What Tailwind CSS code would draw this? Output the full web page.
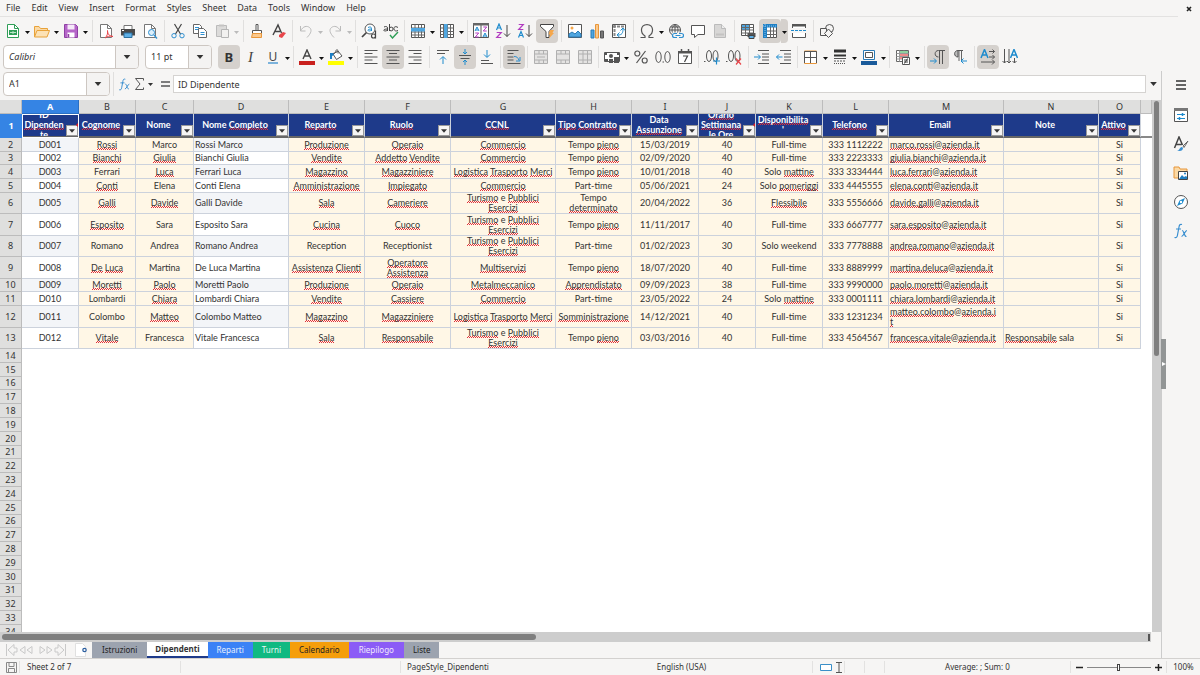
<!DOCTYPE html>
<html lang="en">

<head>
    <meta charset="UTF-8">
    <meta name="viewport" content="width=device-width, initial-scale=1.0">
    <script src="https://cdn.jsdelivr.net/npm/@tailwindcss/browser@4"></script>
    <title>Dipendenti - Calc</title>
</head>

<body class="h-screen flex flex-col overflow-hidden bg-[#f6f5f4] text-[#333] text-[9px] leading-3 font-['Noto_Sans',sans-serif]">
    <!-- Shared symbols -->
    <svg class="hidden">
        <symbol id="caret" viewBox="0 0 5 3"><path d="M0 0h5L2.500 3z" fill="currentColor" /></symbol>
        <symbol id="merge" viewBox="0 0 16 16">
            <path d="M1.500 1.500h13v13h-13z" fill="#e4e3e2" stroke="#b0b0b0" />
            <path d="M1.500 5h13M1.500 11h13M6 1.500V5M10.500 1.500V5M6 11v3.500M10.500 11v3.500" fill="none" stroke="#b0b0b0" />
        </symbol>
        <symbol id="fx" viewBox="0 0 16 16">
            <path d="M9 1.500C7 .8 6.300 2 6 4L4.500 12C4.200 14 3.500 15 1.500 14.500M3 6h5M9 7.500c2-.5 2 6.500 4.500 6M14 7.500c-2 0-3.500 6-5.500 6" fill="none" stroke="#3a8fd0" stroke-width="1.200" />
        </symbol>
    </svg>

    <!-- Menu bar -->
    <header class="flex h-[17px] shrink-0 items-center">
        <nav class="mr-4 flex h-full flex-1 items-center gap-[11px] border-b border-[#e3e2e1] pl-[6px]">
            <a href="#">File</a>
            <a href="#">Edit</a>
            <a href="#">View</a>
            <a href="#">Insert</a>
            <a href="#">Format</a>
            <a href="#">Styles</a>
            <a href="#">Sheet</a>
            <a href="#">Data</a>
            <a href="#">Tools</a>
            <a href="#">Window</a>
            <a href="#">Help</a>
        </nav>
        <button aria-label="Close document" class="-ml-2 mr-2"><svg class="size-[6px]" viewBox="0 0 6 6"><path d="M1 1l4 4M5 1L1 5" stroke="#222" stroke-width="1.600" /></svg></button>
    </header>

    <!-- Standard toolbar -->
    <div id="standard" class="mt-[2px] flex h-6 shrink-0 items-center pl-[2px]"></div>

    <!-- Formatting toolbar -->
    <div class="mt-[2px] flex h-6 shrink-0 items-center pl-[3px]">
        <div class="mr-1.5 flex h-full w-[136px] overflow-hidden rounded border border-[#cdc7c2] bg-white">
            <input aria-label="Font name" value="Calibri" class="w-0 flex-1 pl-[5px] italic outline-none">
            <button aria-label="Font list" class="flex w-[23px] items-center justify-center border-l border-[#cdc7c2] bg-[#f4f3f2]"><svg class="h-1 w-2"><use href="#caret" /></svg></button>
        </div>
        <div class="mr-1.5 flex h-full w-[67px] overflow-hidden rounded border border-[#cdc7c2] bg-white">
            <input aria-label="Font size" value="11 pt" class="w-0 flex-1 pl-[5px] outline-none">
            <button aria-label="Size list" class="flex w-[23px] items-center justify-center border-l border-[#cdc7c2] bg-[#f4f3f2]"><svg class="h-1 w-2"><use href="#caret" /></svg></button>
        </div>
        <div id="formatting" class="flex h-full items-center"></div>
    </div>

    <main class="mt-[2px] flex min-h-0 flex-1">
        <section class="flex min-w-0 flex-1 flex-col">
            <!-- Formula bar -->
            <div class="flex h-[29px] shrink-0 items-start pl-[3px] pt-px">
                <div class="flex h-6 w-[107px] overflow-hidden rounded border border-[#cdc7c2] bg-white">
                    <input aria-label="Name box" value="A1" class="w-0 flex-1 pl-[5px] outline-none">
                    <button aria-label="Cell ranges" class="flex w-[23px] items-center justify-center border-l border-[#cdc7c2] bg-[#f4f3f2]"><svg class="h-1 w-2"><use href="#caret" /></svg></button>
                </div>
                <div class="ml-[3px] flex h-6 items-center border-l border-[#e0dfde] pl-[4px]">
                    <button aria-label="Function wizard"><svg class="size-[13px]"><use href="#fx" /></svg></button>
                    <button aria-label="Select function" class="ml-1 flex items-center gap-1">
                        <svg class="h-3 w-[9px]" viewBox="0 0 9 12"><path d="M8.500 2.500v-2h-8L5 6 .5 11.500h8v-2" fill="none" stroke="#555" /></svg>
                        <svg class="h-[3px] w-[5px]"><use href="#caret" /></svg>
                    </button>
                    <button aria-label="Formula" class="ml-2 mr-[3px]"><svg class="h-[6px] w-[9px]" viewBox="0 0 9 6"><path d="M0 1h9M0 5h9" stroke="#555" stroke-width="1.500" /></svg></button>
                </div>
                <input aria-label="Input line" value="ID Dipendente" class="mt-[3px] h-[18px] flex-1 border border-[#d5d3d1] bg-white pl-[4px] outline-none">
                <button aria-label="Expand formula bar" class="flex h-6 w-[15px] items-center justify-center"><svg class="h-1 w-[7px]"><use href="#caret" /></svg></button>
            </div>

            <!-- Cells -->
            <div class="flex min-h-0 flex-1">
                <div class="min-w-0 flex-1 overflow-hidden bg-white">
                    <table class="w-full table-fixed border-collapse">
                        <colgroup id="cols"></colgroup>
                        <thead id="letters"></thead>
                        <tbody id="cells"></tbody>
                    </table>
                </div>
                <div class="w-[9px] shrink-0 bg-[#cdcdcd] pt-px">
                    <div class="ml-[2px] h-[255px] w-[5px] rounded-full bg-[#7f7f7f]"></div>
                </div>
            </div>
            <div class="mr-[10px] flex h-[10px] shrink-0 items-center bg-[#cdcdcd] pl-[2px]">
                <div class="h-[6px] w-[534px] rounded-full bg-[#7f7f7f]"></div>
                <div class="ml-auto mr-px h-[7px] w-[2px] bg-[#555]"></div>
            </div>

            <!-- Sheet tabs -->
            <div class="flex h-4 shrink-0 items-center text-[8px]">
                <button aria-label="Scroll sheets" class="ml-[5px] mr-[7px]">
                    <svg class="h-[14px] w-[62px]" viewBox="0 0 62 14" fill="none" stroke="#c9c9c9">
                        <path d="M1.500 1v12M3 7l6-5.500v3.500h3v4H9v3.500zM20 3.500L15 7l5 3.500zM27 3.500L22 7l5 3.500zM35 3.500L40 7l-5 3.500zM42 3.500L47 7l-5 3.500zM59 7l-6-5.500v3.500h-3v4h3v3.500zM60.500 1v12" />
                    </svg>
                </button>
                <button aria-label="Add sheet" class="mr-[4px]">
                    <svg class="h-4 w-[14px]" viewBox="0 0 14 16"><path d="M1.500 1.500h7l3 3v10h-10z" fill="#fff" stroke="#e0e0e0" /><circle cx="10.500" cy="8" r="1.700" fill="#fff" stroke="#2a5d9e" stroke-width="1.200" /></svg>
                </button>
                <button class="h-full bg-[#9ca3af] px-[10px] text-[#222]">Istruzioni</button>
                <button class="h-full border-b-2 border-[#1e3a8a] bg-white px-2 font-bold">Dipendenti</button>
                <button class="h-full bg-[#3b82f6] px-[9px] text-[#e8f0fe]">Reparti</button>
                <button class="h-full bg-[#10b981] px-[9px] text-[#e8f8f2]">Turni</button>
                <button class="h-full bg-[#f59e0b] px-[9px] text-[#222]">Calendario</button>
                <button class="h-full bg-[#8b5cf6] px-[10px] text-[#f0eafe]">Riepilogo</button>
                <button class="h-full bg-[#9ca3af] px-[9px] text-[#222]">Liste</button>
            </div>
        </section>

        <!-- Sidebar -->
        <aside class="relative flex w-[39px] shrink-0 flex-col items-center gap-[13px] border-l border-[#ccc] pt-[7px]">
            <button class="absolute -left-px top-[268px] flex h-[50px] w-[5px] items-center justify-center bg-[#929595]" aria-label="Hide sidebar"><svg class="size-1" viewBox="0 0 4 4"><path d="M0 0l4 2-4 2z" fill="#fff" /></svg></button>
            <button aria-label="Sidebar settings"><svg class="size-4" viewBox="0 0 16 16"><path d="M3 3h10M3 7h10M3 11h10" stroke="#333" stroke-width="1.500" /></svg></button>
            <button aria-label="Properties"><svg class="size-4" viewBox="0 0 16 16" fill="none"><path d="M1.500 1.500h13v13h-13z" fill="#fff" stroke="#555" /><path d="M1 1h14v3H1z" fill="#777" /><path d="M4 7.500h8M4 11.500h8" stroke="#1e8bcd" /><path d="M9.500 6v3M6.500 10v3" stroke="#1e8bcd" stroke-width="1.500" /></svg></button>
            <button aria-label="Styles"><svg class="size-4" viewBox="0 0 16 16" fill="none"><path d="M1.500 12L6 1l3.500 8M3 8.500h5.500" stroke="#444" stroke-width="1.500" /><path d="M15 5l-5 5 1 1.500z" fill="#fff" stroke="#666" /><path d="M4 14.500c3 0 2-3 5-3.500l1 1c0 3-3 3.500-6 2.500z" fill="#3a8fd0" /></svg></button>
            <button aria-label="Gallery"><svg class="size-4" viewBox="0 0 16 16"><path d="M1 2h5l1 2h7v9H1z" fill="#fbd9a5" stroke="#e8963a" /><path d="M5.500 6.500h9v8h-9z" fill="#fff" stroke="#444" /><path d="M6 14l3-4 2 2 2-1 1 1v2z" fill="#1e7fc4" /><circle cx="12" cy="8.500" r="1" fill="#1e7fc4" /></svg></button>
            <button aria-label="Navigator"><svg class="size-4" viewBox="0 0 16 16"><circle cx="8" cy="8" r="6.500" fill="#fff" stroke="#555" /><path d="M12 4l-2.500 5.500L4 12l2.500-5.500z" fill="#1e8bcd" /><circle cx="8" cy="8" r="1.200" fill="#fff" /></svg></button>
            <button aria-label="Functions"><svg class="size-4"><use href="#fx" /></svg></button>
        </aside>
    </main>

    <!-- Status bar -->
    <footer class="flex h-[17px] shrink-0 items-center border-t border-[#d3d1cf] text-[8px] *:flex *:h-3 *:items-center">
        <div class="w-5 justify-center border-r border-[#e3e2e1] pl-1"><svg class="size-[11px]" viewBox="0 0 11 11" fill="none" stroke="#888"><path d="M.5.5h10v10H.500zM3 .5v4h5v-4M2.500 10.500v-4h6v4" /></svg></div>
        <div class="w-[161px] border-r border-[#e3e2e1] pl-[7px]">Sheet 2 of 7</div>
        <div class="w-[220px] border-r border-[#e3e2e1]"></div>
        <div class="flex-1 pl-1.5">PageStyle_Dipendenti</div>
        <div class="w-[262px] justify-center border-r border-[#e3e2e1]">English (USA)</div>
        <div class="w-8 justify-center gap-1 border-r border-[#e3e2e1] pl-1">
            <svg class="h-[7px] w-3" viewBox="0 0 12 7"><path d="M.5.5h11v6H.500z" fill="#fff" stroke="#3a8fc8" /></svg>
            <svg class="h-[11px] w-[6px]" viewBox="0 0 6 11"><path d="M0 .5h6M0 10.500h6M3 0v11" stroke="#555" /></svg>
        </div>
        <div class="w-5 border-r border-[#e3e2e1]"></div>
        <div class="w-5 border-r border-[#e3e2e1]"></div>
        <div class="w-[186px] justify-center border-r border-[#e3e2e1]">Average: ; Sum: 0</div>
        <div class="w-24 justify-center gap-1 border-r border-[#e3e2e1]">
            <button aria-label="Zoom out"><svg class="size-[7px]" viewBox="0 0 7 7"><path d="M0 3.500h7" stroke="#222" stroke-width="1.500" /></svg></button>
            <input type="range" aria-label="Zoom" min="0" max="100" value="50" class="h-2 w-16 appearance-none bg-transparent [&::-webkit-slider-runnable-track]:h-px [&::-webkit-slider-runnable-track]:bg-[#888] [&::-webkit-slider-thumb]:-mt-[3px] [&::-webkit-slider-thumb]:h-[7px] [&::-webkit-slider-thumb]:w-[3px] [&::-webkit-slider-thumb]:appearance-none [&::-webkit-slider-thumb]:border [&::-webkit-slider-thumb]:border-[#444] [&::-webkit-slider-thumb]:bg-white">
            <button aria-label="Zoom in"><svg class="size-[7px]" viewBox="0 0 7 7"><path d="M0 3.500h7M3.500 0v7" stroke="#222" stroke-width="1.500" /></svg></button>
        </div>
        <div class="w-[33px] justify-center">100%</div>
    </footer>

    <script>
        // Toolbar icons, drawn on a 16x16 grid
        const icons = {
            New: '<path d="M2.500 1.500h7l4 4v9h-11z" fill="#fff" stroke="#2f9e57"/><path d="M9.500 1.500v4h4" stroke="#2f9e57"/><path d="M4 7h8v5H4z" fill="#2f9e57"/><path d="M5 9.500h6M8 8v3" stroke="#b9e3c6"/>',
            Open: '<path d="M.5 14V3.500H5l1.500 2h7V8" fill="#fbd9a5" stroke="#e8a33a"/><path d="M.5 14L3 7.500h12.500L13 14z" fill="#fce2b6" stroke="#e8a33a"/>',
            Save: '<path d="M1.500 1.500h11l2 2v11h-13z" fill="#b565c8" stroke="#8e3fa3"/><path d="M4.500 1.500h7v5h-7z" fill="#f5e9f8"/><path d="M4.500 9.500h7v5h-7z" fill="#fff"/><path d="M5.500 11v3.500" stroke="#8e3fa3" stroke-width="1.500"/>',
            'Export as PDF': '<path d="M2.500 1.500h7l4 4v9h-11z" fill="#fff" stroke="#777"/><path d="M9.500 1.500v4h4" stroke="#777"/><path d="M7 15c2-2 3-4 2.500-7.500 0 4 2 5.500 5.500 6-3-1-6 0-8 1.500z" stroke="#e8464b"/>',
            Print: '<path d="M4 2.500h8v4H4z" fill="#fff" stroke="#777"/><path d="M1 6h14v6.500H1z" fill="#4a4a4a"/><path d="M2 7.500h2" stroke="#fff"/><path d="M4 10h8v4.500H4z" fill="#5fb0e6" stroke="#2c6f9e"/>',
            'Print Preview': '<path d="M2.500 14.500v-13h7l4 4v9z" fill="#fff" stroke="#777"/><path d="M9.500 1.500v4h4" stroke="#777"/><circle cx="9.500" cy="9.500" r="3" fill="#dceffb" stroke="#2e8fd0"/><path d="M12 12l3 3.500" stroke="#2e8fd0" stroke-width="1.300"/>',
            Cut: '<path d="M4.500 1l6 10M11.500 1l-6 10" stroke="#444" stroke-width="1.200"/><circle cx="4" cy="12.700" r="2.200" stroke="#2e8fd0"/><circle cx="12" cy="12.700" r="2.200" stroke="#2e8fd0"/>',
            Copy: '<path d="M1.500 1.500h6l2 2v7h-8z" fill="#fff" stroke="#666"/><path d="M3 4.500h4M3 6.500h4" stroke="#2e8fd0"/><path d="M6.500 5.500h5l3 3v6h-8z" fill="#fff" stroke="#666"/><path d="M8.500 9.500h4M8.500 11.500h4" stroke="#2e8fd0"/>',
            Paste: '<path d="M2.500 2.500h10v11h-10z" fill="#dcdbda" stroke="#bbb"/><path d="M5 1.500h5v2H5z" fill="#c4c3c2"/><path d="M7.500 6.500h7v8h-7z" fill="#f2f1f0" stroke="#b5b5b5"/>',
            'Clone Formatting': '<path d="M7 1.500h2v6H7z" fill="#fff" stroke="#555"/><path d="M3.500 7.500h9v3h-9z" fill="#fff" stroke="#555"/><path d="M3.500 10.500h9v4h-10z" fill="#fbc98d" stroke="#e8963a"/>',
            'Clear Formatting': '<path d="M2 12L7 2l3.500 8M4 8.500h5" stroke="#444" stroke-width="1.400"/><path d="M8 12l4-3 3 1-4 5-3-1z" fill="#e8464b"/>',
            Undo: '<path d="M2.500 3v5h5M2.500 8C5 3 9 2.500 11.500 4.500s2 5.500-2.500 10" stroke="#bbb"/>',
            Redo: '<path d="M13.500 3v5h-5M13.500 8C11 3 7 2.500 4.500 4.500s-2 5.500 2.500 10" stroke="#bbb"/>',
            'Find and Replace': '<circle cx="9" cy="6" r="5" fill="#fff" stroke="#555"/><path d="M5.500 9.500L1 14" stroke="#444" stroke-width="1.700"/><path d="M7 4.500c2-1 3.500-.5 3.500 1V8M10.500 6C8 6 7 6.500 7 7.300S9 8.500 10.500 7" stroke="#1e8bcd"/><path d="M14.500 7.500v8" stroke="#444" stroke-width="1.200"/><circle cx="12.500" cy="13" r="2" fill="#fff" stroke="#444" stroke-width="1.200"/>',
            Spelling: '<path d="M1 4c2-1 3.500-.5 3.500 1v3M4.500 6C2 6 .8 6.500.8 7.300S3 8.500 4.500 7M6.500 1v7M15 4.500c-3-2-4.500 0-4 1.700s2 2.300 4 1.300" stroke="#444"/><circle cx="8.200" cy="6" r="1.900" stroke="#444"/><path d="M7 12l2.500 3L15 9" stroke="#2f9e57" stroke-width="1.400"/>',
            Row: '<path d="M1.500 1.500h13v13h-13z" fill="#fff" stroke="#555"/><path d="M1.500 5h13M1.500 9h13M1.500 12h13M5 1.500v13M8.500 1.500v13M11.500 1.500v13" stroke="#666"/><path d="M1 5h14v3.500H1z" fill="#4fa6e0"/>',
            Column: '<path d="M1.500 1.500h13v13h-13z" fill="#fff" stroke="#555"/><path d="M1.500 5h13M1.500 8.500h13M1.500 11.500h13M4.500 1.500v13M8.500 1.500v13M11.500 1.500v13" stroke="#666"/><path d="M5 1h3.500v14H5z" fill="#4fa6e0"/>',
            Sort: '<path d="M.5.5h15v14H.500zM8 1v14" fill="#fff" stroke="#555"/><path d="M0 0h16v2.500H0z" fill="#666"/><path d="M2 8l2-4 2 4M2.700 7h2.600M10 14l2-4 2 4M10.700 13h2.600" stroke="#1e8bcd"/><path d="M2.300 10h3.400l-3.400 4h3.400M10.300 4h3.400l-3.400 4h3.400" stroke="#b23cc0"/>',
            'Sort Ascending': '<path d="M1.500 7l2.500-6 2.500 6M2.500 5h3" stroke="#1e8bcd" stroke-width="1.200"/><path d="M1.700 9.500h4.600L1.700 14.500h4.600" stroke="#b23cc0" stroke-width="1.200"/><path d="M12 2v11.500M9 10.500l3 3 3-3" stroke="#444"/>',
            'Sort Descending': '<path d="M1.500 14.500L4 8.500l2.500 6M2.500 12.500h3" stroke="#1e8bcd" stroke-width="1.200"/><path d="M1.700 1.500h4.600L1.700 6.500h4.600" stroke="#b23cc0" stroke-width="1.200"/><path d="M12 2v11.500M9 10.500l3 3 3-3" stroke="#444"/>',
            AutoFilter: '<path d="M1.500 1.500h13v2L10 8.500v6H7v-6L1.500 3.500z" fill="#fff" stroke="#444"/><path d="M11 7h4l-1.500 3H15l-5 5.500 1.200-4H9.500z" fill="#f5a64a"/>',
            'Insert Image': '<path d="M1.500 1.500h13v13h-13z" fill="#fff" stroke="#555"/><path d="M2 14V11l3-2 3 2 3-3 3 3v3z" fill="#4fa6e0" stroke="#2a7ab5"/><circle cx="5" cy="5" r="1.500" fill="#f5a64a"/>',
            'Insert Chart': '<path d="M2 7h3v8H2z" fill="#4fa6e0" stroke="#2a7ab5"/><path d="M6.500 1.500h3v13.500h-3z" fill="#fbc98d" stroke="#e8963a"/><path d="M11.500 8h3v7h-3z" fill="#777" stroke="#555"/>',
            'Pivot Table': '<path d="M1.500 1.500h13v13h-13z" fill="#fff" stroke="#555"/><path d="M2 3.500h12M3.500 2v12" stroke="#888" stroke-width="2" stroke-dasharray="3 1"/><path d="M7 12c4 0 5-2 5-6M9.500 7.500L12 5l2 2.500M8.500 9.500L6 12l2.500 2" stroke="#1e8bcd"/>',
            'Special Character': '<path d="M1.500 14.500H6v-1.500C1 10 1 2 8 1.500c7 .5 7 8.500 2 11.500v1.500h4.500" stroke="#555" stroke-width="1.200"/>',
            Hyperlink: '<circle cx="7" cy="7" r="5.500" stroke="#555"/><path d="M1.500 7h11M2.500 4h9M7 1.500v11M7 1.500c-4 3-4 8 0 11M7 1.500c4 3 4 8 0 11" stroke="#555"/><path d="M4 9.500h12v6H4z" fill="#f6f5f4"/><path d="M9 10.500H6.500a2 2 0 000 4H9M11 10.500h2.500a2 2 0 010 4H11M7.500 12.500h5" stroke="#2e8fd0" stroke-width="1.200"/>',
            Comment: '<path d="M1.500 2.500h13v9H8l-3.500 3v-3h-3z" fill="#fff" stroke="#555"/>',
            'Headers and Footers': '<path d="M2.500 1.500h7l4 4v9h-11z" fill="#d8d7d6" stroke="#bbb"/><path d="M9.500 1.500v4h4" fill="#eee" stroke="#bbb"/><path d="M4 11.500h8" stroke="#c4c3c2" stroke-width="2"/>',
            'Print Area': '<path d="M1.500 1.500h12v11h-12z" fill="#fff" stroke="#555"/><path d="M2 2h8v5H2z" fill="#4fa6e0"/><path d="M1.500 4.500h12M1.500 7h12M1.500 10h12M5.500 1.500v11M9.500 1.500v11" stroke="#666"/><path d="M7.500 10h8v4h-8z" fill="#555"/><path d="M9 12.500h5v3H9z" fill="#5fb0e6" stroke="#444"/>',
            'Freeze Rows and Columns': '<path d="M1.500 1.500h13v13h-13z" fill="#fff" stroke="#555"/><path d="M1 1h14v3.500H5V15H1z" fill="#1e7fc4"/><path d="M5 8h10M5 11.500h10M8.500 4v11M11.500 4v11" stroke="#666"/><path d="M3 1v14M1 3h14" stroke="#8cc6ee" stroke-dasharray="1 1"/>',
            'Split Window': '<path d="M1.500 5V1.500h13V5M1.500 10v4.500h13V10" fill="#fff" stroke="#555"/><path d="M1 1h14v2.500H1z" fill="#555"/><path d="M0 7.500h16" stroke="#1e8bcd" stroke-dasharray="3 1"/>',
            'Draw Functions': '<circle cx="10.500" cy="5.500" r="4" stroke="#555"/><path d="M1.500 5.500h6v7h-6z" fill="#f6f5f4" stroke="#555"/><path d="M9.500 6l4 4.500-4 4-4-4z" fill="#f6f5f4" stroke="#555"/>',
            Bold: '<text x="3.500" y="13" font-size="13" font-weight="bold" fill="#333">B</text>',
            Italic: '<text x="5" y="13" font-size="15" font-style="italic" font-family="Liberation Serif" fill="#444">I</text>',
            Underline: '<text x="3.500" y="11.500" font-size="12" fill="#444">U</text><path d="M3 14h10" stroke="#3a8fd0" stroke-width="1.300"/>',
            'Font Color': '<path d="M4 10L8 1l4 9M5.500 7h5" stroke="#444" stroke-width="1.400"/><path d="M0 12h16v4H0z" fill="#c9211e"/>',
            Highlighting: '<path d="M5 5l5-3 4 5-5.500 3.500z" fill="#fff" stroke="#555"/><path d="M8 4C7 1 9 0 10 1.500v3M3 10V5l4-1" stroke="#555"/><path d="M2 10V4h3l1 2-2 1v3z" fill="#1e7fc4"/><path d="M0 12h16v4H0z" fill="#ff0"/>',
            'Align Left': '<path d="M1.500 1.500h13M1.500 4.500h8M1.500 8h13M1.500 11h8M1.500 14.500h13" stroke="#555"/>',
            'Align Center': '<path d="M1.500 1.500h13M4 4.500h8M1.500 8h13M4 11h8M1.500 14.500h13" stroke="#555"/>',
            'Align Right': '<path d="M1.500 1.500h13M6.500 4.500h8M1.500 8h13M6.500 11h8M1.500 14.500h13" stroke="#555"/>',
            'Align Top': '<path d="M2 1.500h12M2 4.500h8" stroke="#555"/><path d="M8 15V8M5 10.500L8 7.500l3 3" stroke="#1e8bcd"/>',
            'Center Vertically': '<path d="M2 6.500h12M3.500 9.500h9" stroke="#555"/><path d="M8 0v5M6 3l2 2 2-2M8 16v-5M6 13l2-2 2 2" stroke="#1e8bcd"/>',
            'Align Bottom': '<path d="M2 11.500h8M2 14.500h12" stroke="#555"/><path d="M8 1v7M5 5.500l3 3 3-3" stroke="#1e8bcd"/>',
            'Wrap Text': '<path d="M1.500 1.500h11M1.500 4.500h6M1.500 8h6M1.500 11h6M1.500 14.500h13" stroke="#555"/><path d="M8 7.500c3 0 4 1 5 4M14 8v4h-4" stroke="#2e8fd0"/>',
            'Merge and Center': '<use href="#merge"/><path d="M4 8h8" stroke="#b0b0b0"/>',
            'Merge Cells': '<use href="#merge"/>',
            'Unmerge Cells': '<use href="#merge"/><path d="M6 5v6M10.500 5v6" stroke="#b0b0b0"/>',
            Currency: '<path d="M.5 3.500h15v9H.500z" fill="#fff" stroke="#555"/><circle cx="7" cy="7" r="2" fill="#555"/><path d="M1 4h2v2H1zM13 4h2v2h-2zM1 10h3v2H1z" fill="#555"/><path d="M5 10h4v4H5zM10 8h5v6h-5z" fill="#555"/>',
            Percent: '<circle cx="4.300" cy="4.500" r="2.500" stroke="#555" stroke-width="1.200"/><circle cx="11.700" cy="11.500" r="2.500" stroke="#555" stroke-width="1.200"/><path d="M12.500 2l-9 12" stroke="#555" stroke-width="1.200"/>',
            Number: '<ellipse cx="3.500" cy="8" rx="2.700" ry="5.500" stroke="#555"/><path d="M7.500 13h1.500" stroke="#555"/><ellipse cx="12.500" cy="8" rx="2.700" ry="5.500" stroke="#555"/>',
            Date: '<path d="M1.500 2.500h13v12h-13z" fill="#fff" stroke="#555"/><path d="M1 2h14v2.500H1z" fill="#555"/><path d="M4.500 0v3M11.500 0v3" stroke="#555" stroke-width="1.500"/><path d="M6 7h4.500L7.500 13" stroke="#444" stroke-width="1.200"/>',
            'Add Decimal Place': '<path d="M0 12.500h1.500" stroke="#555"/><ellipse cx="5" cy="7" rx="2.500" ry="5.500" stroke="#555"/><ellipse cx="11.500" cy="7" rx="2.500" ry="5.500" stroke="#555"/><path d="M9 12h7M12.500 8.500v7" stroke="#1e8bcd" stroke-width="1.200"/>',
            'Delete Decimal Place': '<path d="M0 12.500h1.500" stroke="#555"/><ellipse cx="5" cy="7" rx="2.500" ry="5.500" stroke="#555"/><ellipse cx="11.500" cy="7" rx="2.500" ry="5.500" stroke="#555"/><path d="M10 9.500l5 6M15 9.500l-5 6" stroke="#e8464b" stroke-width="1.200"/>',
            'Increase Indent': '<path d="M4 1.500h11M8 5h7M8 8h7M8 11h7M4 14.500h11" stroke="#555"/><path d="M0 8h6M4 5.500L6.500 8 4 10.500" stroke="#1e8bcd"/>',
            'Decrease Indent': '<path d="M4 1.500h11M8 5h7M8 8h7M8 11h7M4 14.500h11" stroke="#555"/><path d="M.5 8h6M3 5.500L.5 8 3 10.500" stroke="#1e8bcd"/>',
            Borders: '<path d="M1.500 2v12.500h12V2z" fill="#fff" stroke="#e8963a"/><path d="M1.500 14V2.500h12V14M7.500 2v12M1.500 8.500h12" stroke="#555"/>',
            'Border Style': '<path d="M2 2h12" stroke="#333" stroke-width="3"/><path d="M2 6.500h12" stroke="#333" stroke-width="2"/><path d="M2 9.500h12" stroke="#555"/><path d="M2 12h12" stroke="#555" stroke-dasharray="2 1"/><path d="M2 14.500h12" stroke="#555" stroke-dasharray="1 1"/>',
            'Border Color': '<path d="M2.500 1.500h11v9h-11z" fill="#fff" stroke="#2a7ab5"/><path d="M4.500 3.500h7v5h-7z" stroke="#555"/><path d="M0 12h16v4H0z" fill="#1a5a9a"/>',
            'Conditional Formatting': '<path d="M1.500 1.500h12v11h-12z" fill="#fff" stroke="#666"/><path d="M1.500 4.500h12M1.500 7.500h12M1.500 10h12M4.500 1.500v11M9 1.500v11" stroke="#999"/><path d="M5 2h8v2H5z" fill="#8fd19e"/><path d="M5 5h8v2H5zM5 8h5v2H5z" fill="#f08a8a"/><path d="M7.500 8.500h7v7h-7z" fill="#fff" stroke="#555"/><path d="M9 11h4M9 13h4M12.500 9.500l-3 5" stroke="#444"/>',
            'Left-To-Right': '<path d="M15 1.500H8.500C4 1.500 4 8 8.500 8M9.500 1.500V15M12.500 1.500V15" stroke="#555"/><path d="M0 12h6M4 9.500L6.500 12 4 14.500" stroke="#1e8bcd"/>',
            'Right-To-Left': '<path d="M11 1.500H6C1.500 1.500 1.500 8 6 8V2" fill="#bbb" stroke="#555"/><path d="M7 1.500V12M9.500 1.500V12" stroke="#666"/><path d="M9 12h6M11.500 9.500L9 12l2.500 2.500" stroke="#1e8bcd"/>',
            'Text Left to Right': '<path d="M1 9L4.500.5 8 9M2.500 6h4" stroke="#1e8bcd" stroke-width="1.500"/><path d="M9 2.500h5.500M12.500.500l2 2-2 2M9 8h5.500M12.500 6l2 2-2 2M1 13h13.500M12 10.500l2.500 2.500L12 15.500" stroke="#555"/>',
            'Text Top to Bottom': '<path d="M8.500 9L12 .5 15.500 9M10 6h4" stroke="#1e8bcd" stroke-width="1.500"/><path d="M2.500 0v14M.5 12l2 2 2-2M7 0v14M5 12l2 2 2-2M12.500 9v5M10.500 12l2 2 2-2" stroke="#555"/>'
        };

        // "|" and "¦" are separators, "v" a drop-down arrow, "+" a pressed button, "-" a disabled arrow
        const standard = ['New', 'v', 'Open', 'v', 'Save', 'v', '|', 'Export as PDF', 'Print', 'Print Preview', '|', 'Cut', 'Copy', 'Paste', '-', '|',
            'Clone Formatting', 'Clear Formatting', '¦', 'Undo', '-', 'Redo', '-', '¦', 'Find and Replace', 'Spelling', '¦', 'Row', 'v', 'Column', 'v', '¦',
            'Sort', 'Sort Ascending', 'Sort Descending', '+AutoFilter', '|', 'Insert Image', 'Insert Chart', 'Pivot Table', '|',
            'Special Character', 'v', 'Hyperlink', 'Comment', 'Headers and Footers', '|', 'Print Area', '+Freeze Rows and Columns', '+v', 'Split Window', '|', 'Draw Functions'];
        const formatting = ['+Bold', 'Italic', 'Underline', 'v', '¦', 'Font Color', 'v', 'Highlighting', 'v', '|', 'Align Left', '+Align Center', 'Align Right', '|',
            'Align Top', '+Center Vertically', 'Align Bottom', '¦', '+Wrap Text', '¦', 'Merge and Center', 'Merge Cells', 'Unmerge Cells', '¦',
            'Currency', 'v', 'Percent', 'Number', 'Date', '¦', 'Add Decimal Place', 'Delete Decimal Place', '|', 'Increase Indent', 'Decrease Indent', '¦',
            'Borders', 'v', 'Border Style', 'v', 'Border Color', 'v', '¦', 'Conditional Formatting', 'v', '|', '+Left-To-Right', 'Right-To-Left', '|', '+Text Left to Right', 'Text Top to Bottom'];

        function toolbar(items) {
            return items.map(item => {
                if (item === '|') return '<div class="flex h-[22px] w-1.5 justify-center"><div class="w-px bg-[#e0dfde]"></div></div>';
                if (item === '¦') return '<div class="flex h-[22px] w-[5px] justify-center"><div class="w-px bg-[#e0dfde]"></div></div>';
                if (item === 'v') return '<button aria-label="More" class="flex h-6 w-[7px] items-center justify-center pt-[2px] text-[#111]"><svg class="h-[3px] w-[5px]"><use href="#caret"/></svg></button>';
                if (item === '+v') return '<button aria-label="More" class="flex h-6 w-[7px] items-center justify-center rounded-r bg-[#d5d1cd] pt-[2px] text-[#111]"><svg class="h-[3px] w-[5px]"><use href="#caret"/></svg></button>';
                if (item === '-') return '<button aria-label="More" disabled class="flex h-6 w-[7px] items-center justify-center pt-[2px] text-[#bbb]"><svg class="h-[3px] w-[5px]"><use href="#caret"/></svg></button>';
                const pressed = item[0] === '+';
                const name = item.replace('+', '');
                return `<button aria-label="${name}" class="flex h-6 w-[22px] items-center justify-center ${pressed ? 'rounded bg-[#d5d1cd]' : ''}"><svg class="size-4" viewBox="0 0 16 16" fill="none">${icons[name]}</svg></button>`;
            }).join('');
        }
        document.getElementById('standard').innerHTML = toolbar(standard);
        document.getElementById('formatting').innerHTML = toolbar(formatting);

        // Sheet data, words between underscores are flagged by the spell checker
        const widths = [22, 57, 57, 58, 95, 76, 86, 105, 76, 67, 57, 67, 66, 115, 95, 42];
        const headers = ['ID _Dipenden<br>te_', '_Cognome_', 'Nome', 'Nome _Completo_', '_Reparto_', '_Ruolo_', '_CCNL_', '_Tipo_ _Contratto_', 'Data _Assunzione_',
            '_Orario_ _Settimana<br>le_ _Ore_', "_Disponibilita_<br>'", '_Telefono_', 'Email', 'Note', '_Attivo_'];
        const rows = [
            [14, 'D001', '_Rossi_', 'Marco', 'Rossi Marco', '_Produzione_', '_Operaio_', '_Commercio_', 'Tempo _pieno_', '15/03/2019', '40', 'Full-time', '333 1112222', '_marco.rossi_@_azienda.it_', '', 'Si'],
            [13, 'D002', '_Bianchi_', '_Giulia_', 'Bianchi Giulia', '_Vendite_', '_Addetto_ _Vendite_', '_Commercio_', 'Tempo _pieno_', '02/09/2020', '40', 'Full-time', '333 2223333', '_giulia.bianchi_@_azienda.it_', '', 'Si'],
            [14, 'D003', 'Ferrari', '_Luca_', 'Ferrari Luca', '_Magazzino_', '_Magazziniere_', '_Logistica_ _Trasporto_ _Merci_', 'Tempo _pieno_', '10/01/2018', '40', 'Solo _mattine_', '333 3334444', '_luca.ferrari_@_azienda.it_', '', 'Si'],
            [14, 'D004', '_Conti_', 'Elena', 'Conti Elena', '_Amministrazione_', '_Impiegato_', '_Commercio_', 'Part-time', '05/06/2021', '24', 'Solo _pomeriggi_', '333 4445555', '_elena.conti_@_azienda.it_', '', 'Si'],
            [21, 'D005', '_Galli_', '_Davide_', 'Galli Davide', '_Sala_', '_Cameriere_', '_Turismo_ e _Pubblici_ _Esercizi_', 'Tempo _determinato_', '20/04/2022', '36', '_Flessibile_', '333 5556666', '_davide.galli_@_azienda.it_', '', 'Si'],
            [22, 'D006', '_Esposito_', 'Sara', 'Esposito Sara', '_Cucina_', '_Cuoco_', '_Turismo_ e _Pubblici_ _Esercizi_', 'Tempo _pieno_', '11/11/2017', '40', 'Full-time', '333 6667777', '_sara.esposito_@_azienda.it_', '', 'Si'],
            [21, 'D007', 'Romano', 'Andrea', 'Romano Andrea', 'Reception', 'Receptionist', '_Turismo_ e _Pubblici_ _Esercizi_', 'Part-time', '01/02/2023', '30', 'Solo weekend', '333 7778888', '_andrea.romano_@_azienda.it_', '', 'Si'],
            [22, 'D008', '_De_ _Luca_', 'Martina', 'De Luca Martina', '_Assistenza_ _Clienti_', '_Operatore_ _Assistenza_', '_Multiservizi_', 'Tempo _pieno_', '18/07/2020', '40', 'Full-time', '333 8889999', '_martina.deluca_@_azienda.it_', '', 'Si'],
            [13, 'D009', '_Moretti_', '_Paolo_', 'Moretti Paolo', '_Produzione_', '_Operaio_', '_Metalmeccanico_', '_Apprendistato_', '09/09/2023', '38', 'Full-time', '333 9990000', '_paolo.moretti_@_azienda.it_', '', 'Si'],
            [14, 'D010', 'Lombardi', '_Chiara_', 'Lombardi Chiara', '_Vendite_', '_Cassiere_', '_Commercio_', 'Part-time', '23/05/2022', '24', 'Solo _mattine_', '333 0001111', '_chiara.lombardi_@_azienda.it_', '', 'Si'],
            [22, 'D011', 'Colombo', '_Matteo_', 'Colombo Matteo', '_Magazzino_', '_Magazziniere_', '_Logistica_ _Trasporto_ _Merci_', '_Somministrazione_', '14/12/2021', '40', 'Full-time', '333 1231234', '_matteo.colombo_@_azienda.i<br>t_', '', 'Si'],
            [21, 'D012', '_Vitale_', 'Francesca', 'Vitale Francesca', '_Sala_', '_Responsabile_', '_Turismo_ e _Pubblici_ _Esercizi_', 'Tempo _pieno_', '03/03/2016', '40', 'Full-time', '333 4564567', '_francesca.vitale_@_azienda.it_', '_Responsabile_ sala', 'Si']
        ];
        // Tight red squiggle under the flagged words
        const spell = text => text.replace(/_([^_]+)_/g, '<span class="bg-[repeating-conic-gradient(#e0303a_0_25%,transparent_0_50%)] bg-[length:2px_2px] bg-bottom-left bg-repeat-x box-decoration-clone">$1</span>');

        document.getElementById('cols').innerHTML = widths.map(w => `<col style="width:${w}px">`).join('') + '<col>';
        document.getElementById('letters').innerHTML = '<tr>' + ['', ...'ABCDEFGHIJKLMNO', ''].map(l =>
            `<th class="h-[14px] p-0"><div class="flex h-[14px] items-center justify-center border-r border-b ${l === 'A' ? 'border-[#2a6fc4] bg-[#3584e4] font-bold text-white' : 'border-[#bcbcbc] bg-[#dfdfde] font-normal'}">${l}</div></th>`).join('') + '</tr>';

        // Frozen title row
        let html = '<tr><th class="p-0"><div class="flex h-6 items-center justify-center bg-[#3584e4] font-bold text-white">1</div></th>';
        headers.forEach((h, i) => {
            html += `<th class="p-0"><div class="relative flex h-6 overflow-hidden border-r border-b-2 border-r-[#ccd2dc] border-b-[#666] bg-[#1e3a8a] text-white ${i === 0 ? 'outline outline-white -outline-offset-1' : ''}">
                <div class="flex h-[22px] min-w-0 flex-1 items-center justify-center overflow-hidden"><div class="min-w-0 flex-1 text-center font-['Lato',sans-serif] leading-[10px] wrap-break-word">${spell(h)}</div></div>
                ${i === 0 || i === 9 ? '<svg class="absolute right-0 top-[9px] h-1 w-[2px]" viewBox="0 0 2 4"><path d="M2 0v4L0 2z" fill="#e01b24"/></svg>' : ''}
                <button aria-label="Filter" class="flex h-[11px] w-[12px] items-center justify-center self-end border border-[#999] bg-[#f6f5f4] text-[#333]"><svg class="h-1 w-[6px]"><use href="#caret"/></svg></button>
            </div></th>`;
        });
        html += '<td class="p-0"><div class="h-6 border-b-2 border-[#888]"></div></td></tr>';

        const rowHead = (n, h) => `<th class="p-0 font-normal"><div class="flex items-center justify-center overflow-hidden border-r border-b border-[#bcbcbc] bg-[#dfdfde]" style="height:${h}px">${n}</div></th>`;
        rows.forEach(([height, ...cells], r) => {
            html += '<tr>' + rowHead(r + 2, height);
            cells.forEach((text, c) => {
                const plain = c === 0 || c === 3;
                const fill = !plain ? 'bg-[#fff7e6]' : r % 2 ? 'bg-white' : 'bg-[#f3f5f8]';
                const align = c === 3 || c === 12 || c === 13 ? 'text-left' : 'text-center';
                html += `<td class="p-0"><div class="flex items-center border-r border-b border-[#ccd2dc] px-px ${fill}" style="height:${height}px"><div class="min-w-0 flex-1 font-['Lato',sans-serif] leading-[10px] wrap-break-word ${align}">${spell(text)}</div></div></td>`;
            });
            html += '<td></td></tr>';
        });

        // Empty rows, 13.8px apart on average
        for (let n = 14; n <= 34; n++) {
            const height = Math.round((n - 13) * 13.8) - Math.round((n - 14) * 13.8);
            html += '<tr>' + rowHead(n, height) + '<td colspan="16"></td></tr>';
        }
        document.getElementById('cells').innerHTML = html;
    </script>
</body>

</html>
